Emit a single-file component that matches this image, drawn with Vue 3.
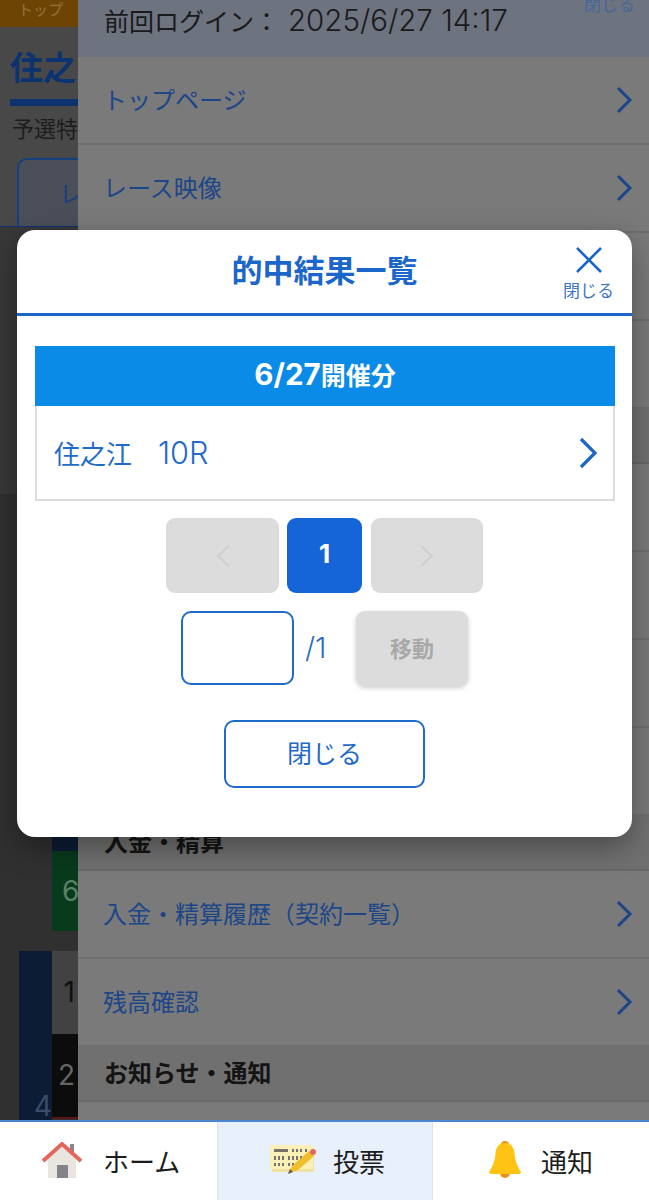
<template>
  <div class="screen">
    <div class="page">
      <div class="top-strip">トップ</div>
      <h1 class="race-name">住之</h1>
      <p class="race-sub">予選特</p>
      <div class="tab-row"><div class="tab">レ</div></div>
      <div class="page-gap"></div>
      <div class="odds">
        <div class="odds-blue-top"></div>
        <div class="odds-green">6</div>
        <div class="odds-spacer"></div>
        <div class="odds-grid">
          <div class="odds-side">4</div>
          <div class="odds-cells">
            <div class="cell-one">1</div>
            <div class="cell-two">2</div>
            <div class="cell-red"></div>
          </div>
        </div>
      </div>
    </div>

    <aside class="drawer">
      <div class="drawer-head">
        <span class="last-login">前回ログイン：<span class="num login-date">2025/6/27 14:17</span></span>
        <span class="drawer-close">閉じる</span>
      </div>
      <template v-for="(item, i) in menu" :key="i">
        <div v-if="item.head !== undefined" class="menu-head">{{ item.head }}</div>
        <div v-else class="menu-row">
          <span>{{ item.label }}</span>
          <svg class="menu-arrow" width="18" height="28" viewBox="0 0 18 28" fill="none">
            <path d="M3 2l12 12L3 26" stroke="#1c4688" stroke-width="3" />
          </svg>
        </div>
      </template>
    </aside>

    <section class="modal">
      <header class="modal-head">
        <h2>的中結果一覧</h2>
        <div class="modal-x">
          <svg width="28" height="28" viewBox="0 0 28 28" fill="none">
            <path d="M2 2l24 24M26 2L2 26" stroke="#1a66c9" stroke-width="2.6" />
          </svg>
          <span>閉じる</span>
        </div>
      </header>
      <div class="modal-body">
        <div class="date-bar"><span class="num">6/27</span>開催分</div>
        <div class="result-row">
          <span>住之江　<span class="num thin">10R</span></span>
          <svg width="20" height="32" viewBox="0 0 20 32" fill="none">
            <path d="M3 2l14 14L3 30" stroke="#1a66c9" stroke-width="3.2" />
          </svg>
        </div>
        <div class="pager">
          <button class="pg-off">
            <svg width="16" height="24" viewBox="0 0 16 24" fill="none"><path d="M14 2L3 12l11 10" stroke="#cfcfcf" stroke-width="2" /></svg>
          </button>
          <button class="pg-on">1</button>
          <button class="pg-off">
            <svg width="16" height="24" viewBox="0 0 16 24" fill="none"><path d="M2 2l11 10L2 22" stroke="#cfcfcf" stroke-width="2" /></svg>
          </button>
        </div>
        <div class="jump">
          <div class="jump-input"></div>
          <span class="jump-total">/1</span>
          <button class="jump-btn">移動</button>
        </div>
        <button class="close-btn">閉じる</button>
      </div>
    </section>

    <nav class="bottom-nav">
      <div class="nav-item">
        <svg width="40" height="36" viewBox="0 0 40 36">
          <rect x="28" y="2" width="4" height="11" fill="#8b8589" />
          <path d="M6 17L20 5l14 12v19H6z" fill="#e9e6e0" />
          <path d="M1 19L20 2l19 17" fill="none" stroke="#e2685c" stroke-width="4" />
          <rect x="15" y="23" width="11" height="13" fill="#85838a" />
        </svg>
        <span>ホーム</span>
      </div>
      <div class="nav-item active">
        <svg width="48" height="32" viewBox="0 0 48 32">
          <rect x="2" y="4" width="42" height="24" fill="#efe2a0" />
          <rect x="0" y="1" width="43" height="24" fill="#faf0b8" />
          <rect x="4" y="5" width="14" height="3" fill="#77736a" />
          <path d="M23 5v3M27 5v3M31 5v3M36 5v3M5 12v4M9 12v4M13 12v4M19 12v4M23 12v4M27 12v4M31 12v4M36 12v4M5 19v3M9 19v3M13 19v3M19 19v3M23 19v3" stroke="#77736a" stroke-width="2" />
          <path d="M18 29l5-8 16-14 5 5-16 14z" fill="#f0bd2c" />
          <path d="M18 30l2-5 3 3z" fill="#5f5a50" />
          <circle cx="43" cy="8" r="3" fill="#e2685c" />
        </svg>
        <span>投票</span>
      </div>
      <div class="nav-item">
        <svg width="32" height="38" viewBox="0 0 32 38">
          <circle cx="16" cy="4" r="4" fill="#ee8f16" />
          <circle cx="16" cy="32" r="5" fill="#ee8f16" />
          <path d="M16 2c6 0 9 4 9.500 10 .5 7 2 12 6.500 19 0 1-1 2-2 2H2c-1 0-2-1-2-2 4.500-7 6-12 6.500-19C7 6 10 2 16 2z" fill="#ffc413" />
        </svg>
        <span>通知</span>
      </div>
    </nav>
  </div>
</template>

<script setup>
const menu = [
  { label: 'トップページ' },
  { label: 'レース映像' },
  { label: '' },
  { label: '' },
  { head: '' },
  { label: '' },
  { label: '' },
  { label: '' },
  { label: '' },
  { head: '入金・精算' },
  { label: '入金・精算履歴（契約一覧）' },
  { label: '残高確認' },
  { head: 'お知らせ・通知' },
  { label: '' }
]
</script>

<style>
html, body {
  margin: 0;
  background: #303030;
}
</style>

<style scoped>
.screen {
  position: relative;
  width: 649px;
  height: 1200px;
  overflow: hidden;
  background: #303030;
  font-family: Inter, "Noto Sans CJK JP", "Noto Sans", sans-serif;
}
.num {
  font-size: 1.18em;
}
.thin {
  font-weight: 300;
}
.page {
  width: 78px;
  height: 1120px;
  display: flex;
  flex-direction: column;
  overflow: hidden;
  background: #484848;
}
.top-strip {
  height: 27px;
  flex: none;
  background: #6e4404;
  color: #94733a;
  font-size: 15px;
  line-height: 20px;
  padding-left: 18px;
  white-space: nowrap;
}
.race-name {
  margin: 20px 0 0 10px;
  width: 68px;
  height: 52px;
  border-bottom: 7px solid #0c3270;
  color: #0c3270;
  font-size: 33px;
  line-height: 42px;
  font-weight: 700;
  white-space: nowrap;
}
.race-sub {
  margin: 9px 0 0 12px;
  color: #1c1c1c;
  font-size: 22px;
  line-height: 28px;
  white-space: nowrap;
}
.tab-row {
  margin-top: 15px;
  height: 68px;
  padding-left: 17px;
  border-bottom: 1px solid #0c3270;
}
.tab {
  width: 70px;
  height: 68px;
  box-sizing: border-box;
  border: 2px solid #17407e;
  border-bottom: none;
  border-radius: 10px 10px 0 0;
  background: #4b4f5a;
  color: #1c3f78;
  font-size: 24px;
  line-height: 70px;
  padding-left: 40px;
}
.page-gap {
  height: 267px;
  background: #383838;
  flex: none;
}
.odds {
  flex: 1;
  display: flex;
  flex-direction: column;
  background: #303030;
  padding-top: 341px;
}
.odds-blue-top {
  margin-left: 52px;
  height: 16px;
  background: #0c1c34;
}
.odds-green {
  margin-left: 52px;
  height: 80px;
  background: #083a1c;
  color: #5b8268;
  font-size: 28px;
  line-height: 80px;
  padding-left: 10px;
  box-sizing: border-box;
}
.odds-spacer {
  height: 20px;
}
.odds-grid {
  flex: 1;
  display: flex;
  padding-left: 19px;
}
.odds-side {
  width: 33px;
  background: #0c1c34;
  color: #3a4c6a;
  font-size: 28px;
  line-height: 28px;
  display: flex;
  align-items: flex-end;
  justify-content: flex-end;
  overflow: hidden;
}
.odds-cells {
  flex: 1;
  display: flex;
  flex-direction: column;
}
.cell-one {
  height: 83px;
  background: #424242;
  color: #111;
  font-size: 28px;
  line-height: 83px;
  text-align: right;
  padding-right: 3px;
}
.cell-two {
  height: 83px;
  background: #0c0c0c;
  color: #666;
  font-size: 28px;
  line-height: 83px;
  text-align: right;
  padding-right: 3px;
}
.cell-red {
  height: 2px;
  background: #5a1515;
}
.drawer {
  position: absolute;
  left: 78px;
  top: 0;
  right: 0;
  height: 1120px;
  overflow: hidden;
  background: #7a7a7a;
}
.drawer-head {
  height: 57px;
  background: #6e7380;
  display: flex;
  justify-content: space-between;
  padding: 0 14px 0 26px;
}
.last-login {
  color: #1a1a1a;
  font-size: 25px;
  line-height: 40px;
  white-space: nowrap;
}
.login-date {
  margin-left: 9px;
  font-weight: 300;
}
.drawer-close {
  margin-top: -7px;
  color: #45689c;
  font-size: 17px;
  line-height: 24px;
}
.menu-row {
  height: 88px;
  box-sizing: border-box;
  display: flex;
  align-items: center;
  justify-content: space-between;
  padding: 0 16px 0 25px;
  border-bottom: 2px solid #6f6f6f;
  color: #1c4688;
  font-size: 24px;
}
.menu-row span {
  margin-bottom: 4px;
}
.menu-head {
  height: 55px;
  box-sizing: border-box;
  display: flex;
  align-items: center;
  padding: 0 0 4px 26px;
  background: #707070;
  border-bottom: 2px solid #686868;
  color: #141414;
  font-size: 24px;
  font-weight: 700;
}
.modal {
  position: absolute;
  left: 17px;
  top: 230px;
  width: 615px;
  height: 607px;
  background: #fff;
  border-radius: 18px;
  box-shadow: 0 10px 30px rgba(0, 0, 0, 0.35);
}
.modal-head {
  position: relative;
  height: 86px;
  box-sizing: border-box;
  border-bottom: 3px solid #1a66c9;
  display: flex;
  align-items: center;
  justify-content: center;
  padding-bottom: 6px;
}
.modal-head h2 {
  margin: 0;
  color: #1a66c9;
  font-size: 31px;
  font-weight: 700;
}
.modal-x {
  position: absolute;
  right: 18px;
  top: 16px;
  display: flex;
  flex-direction: column;
  align-items: center;
  gap: 5px;
  color: #3f78c4;
  font-size: 17px;
  line-height: 24px;
}
.modal-body {
  padding: 30px 18px 0;
  display: flex;
  flex-direction: column;
  align-items: center;
}
.date-bar {
  align-self: flex-start;
  width: 580px;
  flex: none;
  height: 60px;
  background: #0a8be8;
  color: #fff;
  font-size: 25px;
  font-weight: 700;
  line-height: 56px;
  text-align: center;
}
.result-row {
  align-self: flex-start;
  width: 580px;
  flex: none;
  height: 95px;
  box-sizing: border-box;
  border: 2px solid #dcdcdc;
  border-top: none;
  display: flex;
  align-items: center;
  justify-content: space-between;
  padding: 0 15px 0 17px;
  color: #1f6bc7;
  font-size: 26px;
}
button {
  font-family: inherit;
  border: none;
  padding: 0;
}
.pager {
  margin-top: 17px;
  display: flex;
  gap: 8px;
}
.pg-off {
  width: 113px;
  height: 75px;
  border-radius: 9px;
  background: #dcdcdc;
  display: flex;
  align-items: center;
  justify-content: center;
}
.pg-on {
  width: 75px;
  height: 75px;
  margin-right: 1px;
  border-radius: 9px;
  background: #1565d8;
  color: #fff;
  font-size: 26px;
  font-weight: 700;
  padding-bottom: 4px;
}
.pg-on + .pg-off {
  width: 112px;
}
.jump {
  margin-top: 18px;
  width: 287px;
  display: flex;
  align-items: flex-start;
}
.jump-input {
  width: 113px;
  height: 74px;
  box-sizing: border-box;
  border: 2px solid #1f6bc7;
  border-radius: 10px;
}
.jump-total {
  margin-left: 11px;
  width: 51px;
  color: #2a6cc0;
  font-size: 29px;
  font-weight: 300;
  line-height: 74px;
}
.jump-btn {
  width: 112px;
  height: 75px;
  border-radius: 9px;
  background: #dcdcdc;
  box-shadow: 0 2px 5px rgba(0, 0, 0, 0.2);
  color: #a8a8a8;
  font-size: 22px;
  font-weight: 700;
  padding-bottom: 4px;
}
.close-btn {
  margin-top: 34px;
  width: 201px;
  height: 68px;
  box-sizing: border-box;
  border: 2px solid #1f6bc7;
  border-radius: 10px;
  background: #fff;
  color: #1f6bc7;
  font-size: 25px;
  padding-bottom: 4px;
}
.bottom-nav {
  position: absolute;
  left: 0;
  right: 0;
  bottom: 0;
  height: 80px;
  box-sizing: border-box;
  border-top: 2px solid #4a86d0;
  background: #fff;
  display: grid;
  grid-template-columns: 217px 216px 216px;
}
.nav-item {
  display: flex;
  align-items: center;
  color: #1c1c1c;
  font-size: 26px;
  padding-bottom: 2px;
}
.nav-item:nth-child(1) {
  padding-left: 42px;
  gap: 21px;
}
.nav-item:nth-child(2) {
  padding-left: 52px;
  gap: 15px;
}
.nav-item:nth-child(3) {
  padding-left: 56px;
  gap: 20px;
}
.active {
  background: #e8f1fb;
  border-left: 1px solid #dde3ea;
  border-right: 1px solid #dde3ea;
}
</style>
